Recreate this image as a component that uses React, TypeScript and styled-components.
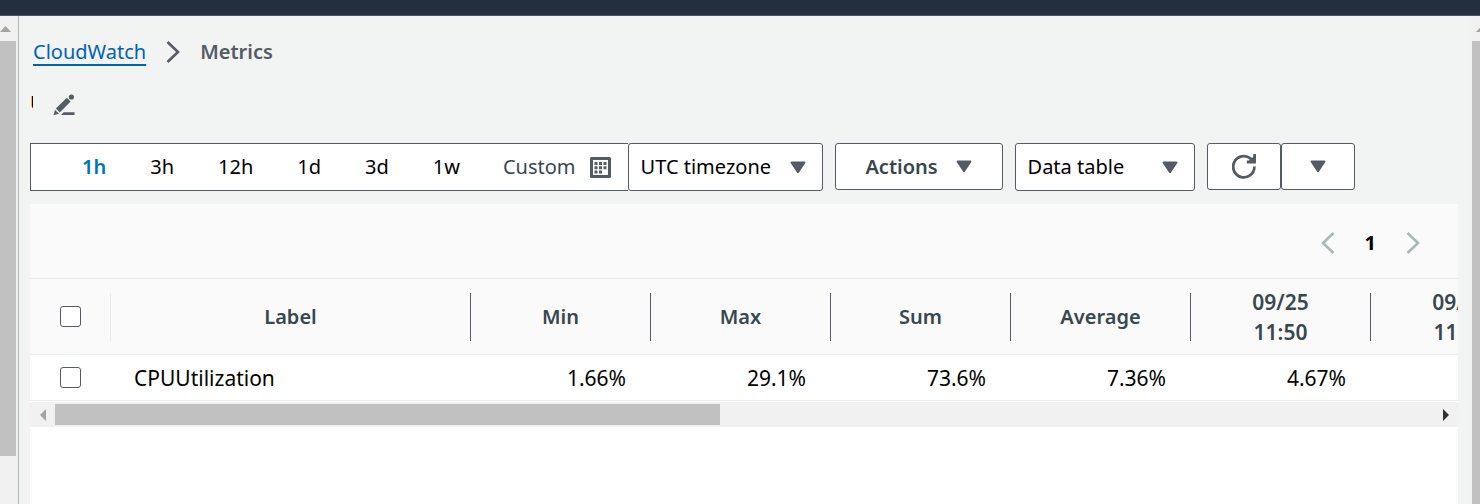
import React from "react";
import styled, { createGlobalStyle, css } from "styled-components";

const color = {
  ink: "#000000",
  heading: "#37474f",
  muted: "#545b64",
  link: "#0073bb",
  crumb: "#0062b8",
  pale: "#aab7b8",
  line: "#eaeded",
  page: "#f2f3f3",
  track: "#f1f1f1",
  thumb: "#c1c1c1",
};

const GlobalStyle = createGlobalStyle`
  *, *::before, *::after { box-sizing: border-box; }
  body {
    margin: 0;
    background: ${color.page};
    color: ${color.ink};
    font: 20px/30px "Noto Sans", "Open Sans", sans-serif;
  }
  button, select, input { font: inherit; color: inherit; margin: 0; }
  svg { display: block; flex: none; }
`;

const Page = styled.div`
  display: flex;
  flex-direction: column;
  height: 100vh;
  overflow: hidden;
`;

const TopBar = styled.header`
  flex: none;
  height: 16px;
  background: #232f3e;
  border-bottom: 1px solid #4a5360;
`;

const Body = styled.div`
  display: flex;
  flex: 1;
  min-height: 0;
`;

const VerticalTrack = styled.div<{ $wide?: boolean }>`
  flex: none;
  display: flex;
  flex-direction: column;
  width: ${(p) => (p.$wide ? "19px" : "10px")};
  padding-right: ${(p) => (p.$wide ? "2px" : "0")};
  padding-left: ${(p) => (p.$wide ? "0" : "2px")};
  border-right: ${(p) => (p.$wide ? `1px solid ${color.pale}` : "0")};
  background: ${color.track};
  overflow: hidden;
`;

const ArrowSlot = styled.div<{ $inset: number }>`
  flex: none;
  height: 25px;
  padding: 10px 0 0 ${(p) => p.$inset}px;
`;

const VerticalThumb = styled.div<{ $length: string }>`
  flex: 0 0 ${(p) => p.$length};
  background: ${color.thumb};
`;

const Main = styled.main`
  flex: 1;
  min-width: 0;
  display: flex;
  flex-direction: column;
  padding: 20px 12px 0 11px;
`;

const Breadcrumb = styled.nav`
  display: flex;
  align-items: center;
  gap: 20px;
  height: 32px;
  padding-left: 3px;
`;

const CrumbLink = styled.a`
  color: ${color.crumb};
  text-decoration: underline;
  text-decoration-thickness: 2px;
  text-decoration-skip-ink: none;
  text-underline-offset: 5px;
`;

const CurrentCrumb = styled.span`
  color: ${color.muted};
  font-weight: 600;
`;

const TitleRow = styled.div`
  display: flex;
  align-items: center;
  gap: 20px;
  height: 44px;
  margin-top: 15px;
`;

const ClippedTitle = styled.span`
  width: 3px;
  line-height: 34px;
  margin-bottom: 4px;
  overflow: hidden;
`;

const IconButton = styled.button`
  display: flex;
  padding: 0;
  border: 0;
  background: none;
  color: ${color.muted};
`;

const Toolbar = styled.div`
  display: flex;
  align-items: flex-start;
  gap: 12px;
  margin-top: 16px;
`;

const Joined = styled.div`
  display: flex;
`;

const RangeGroup = styled.div`
  display: flex;
  align-items: center;
  height: 48px;
  padding: 0 17px 0 29px;
  background: #fff;
  border: 1px solid ${color.muted};
  border-right: 0;
`;

const RangeButton = styled.button<{ $active?: boolean }>`
  display: flex;
  align-items: center;
  gap: 14px;
  padding: 0 22px;
  border: 0;
  background: none;
  ${(p) =>
    p.$active &&
    css`
      color: ${color.link};
      font-weight: 600;
    `}
`;

const CustomButton = styled(RangeButton)`
  padding-right: 0;
  padding-left: 21px;
  color: ${color.heading};
`;

const SelectBox = styled.label<{ $width: number }>`
  display: grid;
  align-items: center;
  width: ${(p) => p.$width}px;
  > * {
    grid-area: 1 / 1;
  }
  > svg {
    justify-self: end;
    margin-right: 17px;
    pointer-events: none;
  }
`;

const Select = styled.select`
  appearance: none;
  width: 100%;
  height: 48px;
  padding: 0 12px;
  border: 1px solid ${color.muted};
  border-radius: 3px;
  background: #fff;
`;

const ToolButton = styled.button<{ $width: number }>`
  display: flex;
  align-items: center;
  justify-content: center;
  gap: 18px;
  width: ${(p) => p.$width}px;
  height: 47px;
  padding: 0;
  border: 1px solid ${color.muted};
  border-radius: 3px;
  background: #fff;
  color: ${color.heading};
  font-weight: 600;
`;

const Panel = styled.section`
  flex: 1;
  min-height: 0;
  margin-top: 13px;
  background: #fff;
  overflow: hidden;
`;

const Pagination = styled.nav`
  display: flex;
  align-items: center;
  justify-content: flex-end;
  gap: 30px;
  height: 74px;
  padding: 4px 38px 0 0;
  background: #fafafa;
`;

const PageButton = styled.button`
  display: flex;
  padding: 0;
  border: 0;
  background: none;
  color: ${color.pale};
`;

const CurrentPage = styled(PageButton)`
  color: ${color.ink};
  font-weight: 700;
`;

const TableClip = styled.div`
  overflow: hidden;
`;

const Table = styled.table`
  table-layout: fixed;
  width: 1520px;
  border-collapse: collapse;
`;

const Col = styled.col<{ $width: number }>`
  width: ${(p) => p.$width}px;
`;

const HeadCell = styled.th<{ $date?: boolean }>`
  height: 76px;
  padding: 0;
  background: #fafafa;
  border: solid ${color.line};
  border-width: 1px 0;
  color: ${color.heading};
  font-size: ${(p) => (p.$date ? "21px" : "20px")};
  font-weight: 600;
`;

const HeadInner = styled.div`
  display: flex;
  align-items: center;
  height: 60px;
  > span {
    flex: 1;
  }
`;

const Divider = styled.i<{ $pale?: boolean }>`
  width: 1px;
  height: 48px;
  background: ${(p) => (p.$pale ? color.line : color.muted)};
`;

const Cell = styled.td<{ $align?: "left" | "right" | "center" }>`
  height: 46px;
  padding: 0 24px;
  border-bottom: 1px solid ${color.line};
  font-size: 21px;
  text-align: ${(p) => p.$align ?? "right"};
`;

const Checkbox = styled.input.attrs({ type: "checkbox" })`
  appearance: none;
  display: block;
  width: 21px;
  height: 21px;
  margin: 0 auto;
  border: 1px solid ${color.muted};
  border-radius: 3px;
  background: #fff;
`;

const HorizontalTrack = styled.div`
  display: flex;
  align-items: center;
  height: 25px;
  margin-top: 1px;
  background: ${color.track};
`;

const EndSlot = styled.div`
  flex: none;
  display: flex;
  justify-content: center;
  width: 25px;
`;

const HorizontalThumb = styled.div`
  flex: 665;
  height: 21px;
  background: ${color.thumb};
`;

const TrackRest = styled.div`
  flex: 713;
`;

const Caret = () => (
  <svg width="16" height="13" viewBox="0 0 16 13" aria-hidden="true">
    <path d="M1.5 1.5h13L8 11.2z" fill={color.muted} stroke={color.muted} strokeWidth="2" strokeLinejoin="round" />
  </svg>
);

const Chevron = ({ left, stroke = "currentColor" }: { left?: boolean; stroke?: string }) => (
  <svg width="14" height="24" viewBox="0 0 14 24" aria-hidden="true">
    <path d={left ? "M12.5 2L2 12l10.5 10" : "M1.5 2L12 12 1.5 22"} fill="none" stroke={stroke} strokeWidth="2.6" />
  </svg>
);

const Pencil = () => (
  <svg width="22" height="22" viewBox="0 0 22 22" fill="currentColor" aria-hidden="true">
    <path d="M0.5 21.2L2 15.8l3.9 3.9z" />
    <path d="M2.9 14.5L13.8 3.8l3.8 3.8L6.8 18.4z" />
    <circle cx="18.4" cy="3" r="2.6" />
    <path d="M10.6 18.3H21.5V21H8z" />
  </svg>
);

const Calendar = () => (
  <svg width="21" height="21" viewBox="0 0 21 21" aria-hidden="true">
    <path d="M1.5 1.5h18v18h-18z" fill="#fff" stroke={color.muted} strokeWidth="3" strokeLinejoin="round" />
    <path
      d="M9 5h3v3H9zM13.5 5h3v3h-3zM4.5 5h3v3h-3zM4.5 9.3h3v3h-3zM9 9.3h3v3H9zM13.5 9.3h3v3h-3zM4.5 13.6h3v3h-3zM9 13.6h3v3H9z"
      fill={color.muted}
    />
  </svg>
);

const Refresh = () => (
  <svg width="24" height="25" viewBox="0 0 24 25" fill="none" stroke={color.muted} strokeWidth="2.8" aria-hidden="true">
    <path d="M22.4 12.6A10.6 10.6 0 1 1 18.6 4.6L21 7" />
    <path d="M21.2 0H24V9.4H14.8V6.6H17L21.2 3z" fill={color.muted} stroke="none" />
  </svg>
);

const UpArrow = () => (
  <svg width="11" height="6" viewBox="0 0 11 6" aria-hidden="true">
    <path d="M0 6L5.5 0 11 6z" fill="#a3a3a3" />
  </svg>
);

const SideArrow = ({ right }: { right?: boolean }) => (
  <svg width="6" height="12" viewBox="0 0 6 12" aria-hidden="true">
    <path d={right ? "M0 0l6 6-6 6z" : "M6 0L0 6l6 6z"} fill={right ? "#333" : "#a3a3a3"} />
  </svg>
);

const ranges = ["1h", "3h", "12h", "1d", "3d", "1w"];

const columns: { lines: string[]; value: string; width: number }[] = [
  { lines: ["Label"], value: "CPUUtilization", width: 360 },
  { lines: ["Min"], value: "1.66%", width: 180 },
  { lines: ["Max"], value: "29.1%", width: 180 },
  { lines: ["Sum"], value: "73.6%", width: 180 },
  { lines: ["Average"], value: "7.36%", width: 180 },
  { lines: ["09/25", "11:50"], value: "4.67%", width: 180 },
  { lines: ["09/25", "11:55"], value: "", width: 180 },
];

export default function App() {
  return (
    <Page>
      <GlobalStyle />
      <TopBar />
      <Body>
        <VerticalTrack $wide aria-hidden="true">
          <ArrowSlot $inset={0}>
            <UpArrow />
          </ArrowSlot>
          <VerticalThumb $length="85%" />
        </VerticalTrack>
        <Main>
          <Breadcrumb aria-label="Breadcrumb">
            <CrumbLink href="#cloudwatch">CloudWatch</CrumbLink>
            <Chevron stroke={color.muted} />
            <CurrentCrumb aria-current="page">Metrics</CurrentCrumb>
          </Breadcrumb>
          <TitleRow>
            <ClippedTitle>U</ClippedTitle>
            <IconButton aria-label="Edit name">
              <Pencil />
            </IconButton>
          </TitleRow>
          <Toolbar>
            <Joined>
              <RangeGroup role="group" aria-label="Time range">
                {ranges.map((range, i) => (
                  <RangeButton key={range} $active={i === 0} aria-pressed={i === 0}>
                    {range}
                  </RangeButton>
                ))}
                <CustomButton>
                  Custom
                  <Calendar />
                </CustomButton>
              </RangeGroup>
              <SelectBox $width={195}>
                <Select aria-label="Timezone">
                  <option>UTC timezone</option>
                </Select>
                <Caret />
              </SelectBox>
            </Joined>
            <ToolButton $width={168}>
              Actions
              <Caret />
            </ToolButton>
            <SelectBox $width={180}>
              <Select aria-label="Chart type">
                <option>Data table</option>
              </Select>
              <Caret />
            </SelectBox>
            <Joined>
              <ToolButton $width={74} aria-label="Refresh">
                <Refresh />
              </ToolButton>
              <ToolButton $width={74} aria-label="Refresh options">
                <Caret />
              </ToolButton>
            </Joined>
          </Toolbar>
          <Panel>
            <Pagination aria-label="Pages">
              <PageButton aria-label="Previous page">
                <Chevron left />
              </PageButton>
              <CurrentPage aria-current="page">1</CurrentPage>
              <PageButton aria-label="Next page">
                <Chevron />
              </PageButton>
            </Pagination>
            <TableClip>
              <Table>
                <colgroup>
                  <Col $width={80} />
                  {columns.map((c) => (
                    <Col key={c.lines.join(" ")} $width={c.width} />
                  ))}
                </colgroup>
                <thead>
                  <tr>
                    <HeadCell scope="col">
                      <Checkbox aria-label="Select all metrics" />
                    </HeadCell>
                    {columns.map((c, i) => (
                      <HeadCell key={c.lines.join(" ")} scope="col" $date={c.lines.length > 1}>
                        <HeadInner>
                          <Divider $pale={i === 0} />
                          <span>
                            {c.lines[0]}
                            {c.lines[1] && <br />}
                            {c.lines[1]}
                          </span>
                        </HeadInner>
                      </HeadCell>
                    ))}
                  </tr>
                </thead>
                <tbody>
                  <tr>
                    <Cell $align="center">
                      <Checkbox aria-label="Select CPUUtilization" />
                    </Cell>
                    {columns.map((c, i) => (
                      <Cell key={c.lines.join(" ")} $align={i === 0 ? "left" : "right"}>
                        {c.value}
                      </Cell>
                    ))}
                  </tr>
                </tbody>
              </Table>
            </TableClip>
            <HorizontalTrack aria-hidden="true">
              <EndSlot>
                <SideArrow />
              </EndSlot>
              <HorizontalThumb />
              <TrackRest />
              <EndSlot>
                <SideArrow right />
              </EndSlot>
            </HorizontalTrack>
          </Panel>
        </Main>
        <VerticalTrack aria-hidden="true">
          <ArrowSlot $inset={4}>
            <UpArrow />
          </ArrowSlot>
          <VerticalThumb $length="100%" />
        </VerticalTrack>
      </Body>
    </Page>
  );
}
